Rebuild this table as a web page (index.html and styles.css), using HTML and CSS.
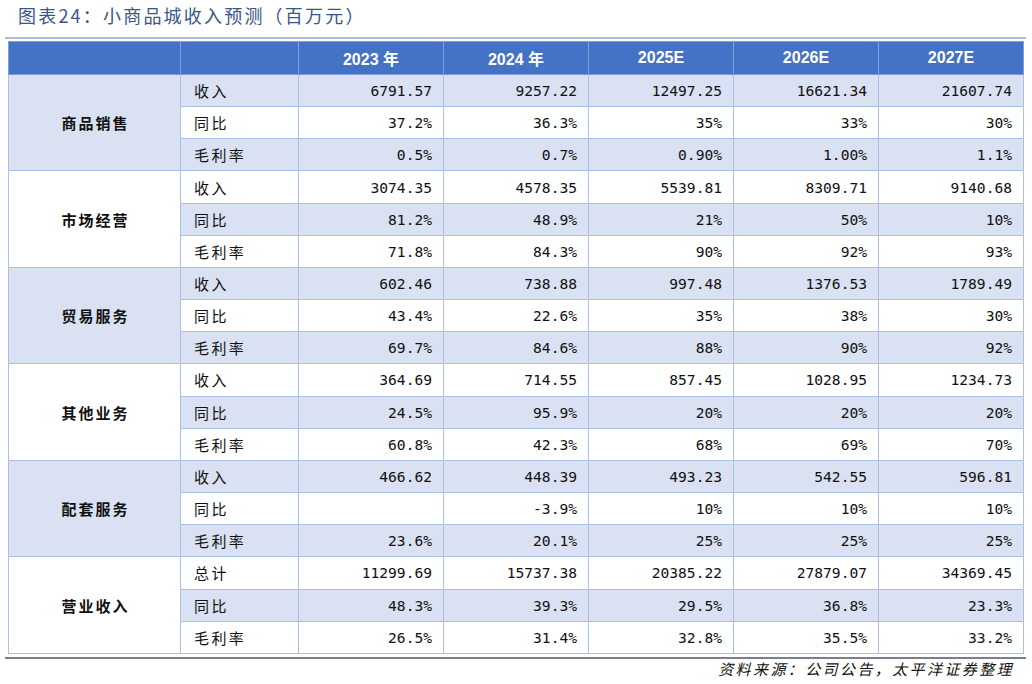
FILE: index.html
```html
<!DOCTYPE html>
<html lang="zh">
<head>
<meta charset="utf-8">
<title>小商品城收入预测</title>
<link rel="stylesheet" href="styles.css">
</head>
<body>
<div class="page">
  <h1 class="title">图表24：小商品城收入预测（百万元）</h1>
  <div class="rule-top"></div>
  <table class="data">
    <colgroup>
      <col class="c-group"><col class="c-item">
      <col class="c-num"><col class="c-num"><col class="c-num"><col class="c-num"><col class="c-num">
    </colgroup>
    <thead>
      <tr><th></th><th></th><th>2023 年</th><th>2024 年</th><th>2025E</th><th>2026E</th><th>2027E</th></tr>
    </thead>
    <tbody>
      <tr class="shade"><td class="grp" rowspan="3">商品销售</td><td class="item">收入</td><td class="num">6791.57</td><td class="num">9257.22</td><td class="num">12497.25</td><td class="num">16621.34</td><td class="num">21607.74</td></tr>
      <tr><td class="item">同比</td><td class="num">37.2%</td><td class="num">36.3%</td><td class="num">35%</td><td class="num">33%</td><td class="num">30%</td></tr>
      <tr class="shade"><td class="item">毛利率</td><td class="num">0.5%</td><td class="num">0.7%</td><td class="num">0.90%</td><td class="num">1.00%</td><td class="num">1.1%</td></tr>

      <tr><td class="grp" rowspan="3">市场经营</td><td class="item">收入</td><td class="num">3074.35</td><td class="num">4578.35</td><td class="num">5539.81</td><td class="num">8309.71</td><td class="num">9140.68</td></tr>
      <tr class="shade"><td class="item">同比</td><td class="num">81.2%</td><td class="num">48.9%</td><td class="num">21%</td><td class="num">50%</td><td class="num">10%</td></tr>
      <tr><td class="item">毛利率</td><td class="num">71.8%</td><td class="num">84.3%</td><td class="num">90%</td><td class="num">92%</td><td class="num">93%</td></tr>

      <tr class="shade"><td class="grp" rowspan="3">贸易服务</td><td class="item">收入</td><td class="num">602.46</td><td class="num">738.88</td><td class="num">997.48</td><td class="num">1376.53</td><td class="num">1789.49</td></tr>
      <tr><td class="item">同比</td><td class="num">43.4%</td><td class="num">22.6%</td><td class="num">35%</td><td class="num">38%</td><td class="num">30%</td></tr>
      <tr class="shade"><td class="item">毛利率</td><td class="num">69.7%</td><td class="num">84.6%</td><td class="num">88%</td><td class="num">90%</td><td class="num">92%</td></tr>

      <tr><td class="grp" rowspan="3">其他业务</td><td class="item">收入</td><td class="num">364.69</td><td class="num">714.55</td><td class="num">857.45</td><td class="num">1028.95</td><td class="num">1234.73</td></tr>
      <tr class="shade"><td class="item">同比</td><td class="num">24.5%</td><td class="num">95.9%</td><td class="num">20%</td><td class="num">20%</td><td class="num">20%</td></tr>
      <tr><td class="item">毛利率</td><td class="num">60.8%</td><td class="num">42.3%</td><td class="num">68%</td><td class="num">69%</td><td class="num">70%</td></tr>

      <tr class="shade"><td class="grp" rowspan="3">配套服务</td><td class="item">收入</td><td class="num">466.62</td><td class="num">448.39</td><td class="num">493.23</td><td class="num">542.55</td><td class="num">596.81</td></tr>
      <tr><td class="item">同比</td><td class="num"></td><td class="num">-3.9%</td><td class="num">10%</td><td class="num">10%</td><td class="num">10%</td></tr>
      <tr class="shade"><td class="item">毛利率</td><td class="num">23.6%</td><td class="num">20.1%</td><td class="num">25%</td><td class="num">25%</td><td class="num">25%</td></tr>

      <tr><td class="grp" rowspan="3">营业收入</td><td class="item">总计</td><td class="num">11299.69</td><td class="num">15737.38</td><td class="num">20385.22</td><td class="num">27879.07</td><td class="num">34369.45</td></tr>
      <tr class="shade"><td class="item">同比</td><td class="num">48.3%</td><td class="num">39.3%</td><td class="num">29.5%</td><td class="num">36.8%</td><td class="num">23.3%</td></tr>
      <tr><td class="item">毛利率</td><td class="num">26.5%</td><td class="num">31.4%</td><td class="num">32.8%</td><td class="num">35.5%</td><td class="num">33.2%</td></tr>
    </tbody>
  </table>
  <div class="rule-bottom"></div>
  <p class="source">资料来源：公司公告，太平洋证券整理</p>
</div>
</body>
</html>
```

FILE: styles.css
```css
* { box-sizing: border-box; }
html, body { margin: 0; padding: 0; background: #ffffff; }
.page {
  width: 1032px;
  height: 684px;
  overflow: hidden;
  font-family: "Noto Sans CJK SC", sans-serif;
  color: #111111;
}
.title {
  margin: 0;
  height: 37px;
  padding: 0 0 0 18px;
  font-size: 18px;
  line-height: 30px;
  font-weight: 400;
  letter-spacing: 2.2px;
  color: #3b5688;
}
.rule-top {
  margin: 0 6px 0 5px;
  border-top: 2px solid #b7b8d6;
}
.data {
  margin: 2px 0 0 8px;
  width: 1015px;
  border-collapse: collapse;
  table-layout: fixed;
  border: 1.5px solid #b3c6e8;
}
.c-group { width: 172px; }
.c-item { width: 118px; }
.c-num { width: 145px; }
.data th {
  height: 33px;
  padding: 0;
  background: #4472c4;
  color: #ffffff;
  font-family: "Liberation Sans", "Noto Sans CJK SC", sans-serif;
  font-size: 16px;
  font-weight: 700;
  text-align: center;
  border: 1px solid #7f9fd8;
}
.data tbody tr { height: 32.17px; }
.data td {
  padding: 0;
  border: 1px solid #a9c0e8;
  background: #ffffff;
  vertical-align: middle;
}
.data tr.shade td { background: #d9e1f2; }
.grp {
  text-align: center;
  font-size: 15px;
  font-weight: 700;
  letter-spacing: 2px;
  padding-left: 2px !important;
}
.item {
  text-align: left;
  padding-left: 13px !important;
  font-size: 15px;
  letter-spacing: 2.4px;
  font-weight: 400;
}
.num {
  text-align: right;
  padding-right: 11px !important;
  font-family: "DejaVu Sans Mono", monospace;
  font-size: 14.6px;
}
.rule-bottom {
  margin: 3px 6px 0 5px;
  border-top: 2px solid #7c7d8e;
}
.source {
  margin: 0;
  padding-right: 18px;
  text-align: right;
  font-size: 15px;
  line-height: 20px;
  font-style: italic;
  letter-spacing: 2.4px;
  color: #111111;
}
```
